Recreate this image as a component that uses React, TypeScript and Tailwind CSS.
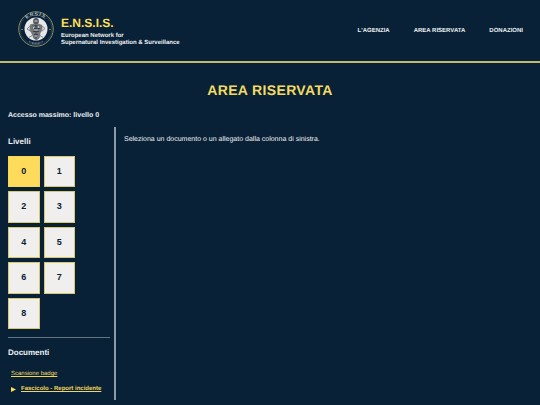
import { useState } from "react";

const LEVELS = [0, 1, 2, 3, 4, 5, 6, 7, 8];

function Emblem() {
  return (
    <svg viewBox="0 0 72 72" className="size-9 shrink-0" role="img" aria-label="Stemma E.N.S.I.S.">
      <defs>
        <path id="upper-arc" d="M9 36a27 27 0 0 1 54 0" />
      </defs>
      <circle cx="36" cy="36" r="34.5" fill="#092139" stroke="#8b915f" strokeWidth="2" />
      <circle cx="36" cy="36" r="32" fill="none" stroke="#3d566a" strokeWidth="1" />
      <circle cx="36" cy="36" r="23" fill="#e5e7e8" />
      <text fontSize="9" fontWeight="700" fill="#c6ced3" fontFamily="Liberation Sans, sans-serif" textAnchor="middle">
        <textPath href="#upper-arc" startOffset="50%">E.N.S.I.S.</textPath>
      </text>
      <path d="M31 16l5-3 5 3 1 6-3 5h-6l-3-5z" fill="#53585d" />
      <path d="M24 27l8-2 4 3 5-3 7 3 1 8-4 8-2 10-6 5-6-4-4-10-4-8z" fill="#74787c" />
      <path d="M29 30h12M28 35h16M30 41h12M32 47h8M36 26v30" stroke="#3c4249" strokeWidth="2" />
      <path d="M25 29l-7 7 8 5M47 29l7 6-7 6M28 49l-6 4M44 49l6 4" fill="none" stroke="#80868b" strokeWidth="2" />
      <path d="M33 20h6M32 31l-2 5M40 30l2 4M33 38h6M34 50h4" stroke="#d3d6d7" strokeWidth="2" />
      <path d="M22 61q14 6 28 0M28 65q8 2 16 0" fill="none" stroke="#8795a0" strokeWidth="2" strokeDasharray="2 1" />
      <circle cx="8" cy="37" r="1.5" fill="#a7a76c" />
      <circle cx="64" cy="37" r="1.5" fill="#a7a76c" />
    </svg>
  );
}

export default function App() {
  const [level, setLevel] = useState(0);

  return (
    <div className="min-h-screen bg-[#082137] font-['Liberation_Sans',Arial,sans-serif] text-[#edf0f2] [text-rendering:geometricPrecision]">
      <header className="flex items-center justify-between border-b-2 border-[#c3bb6c] pt-[11px] pr-[17px] pb-[14px] pl-[18px]">
        <div className="flex items-start gap-[7px]">
          <Emblem />
          <div className="pt-1">
            <div className="text-[12px] leading-[16px] font-bold text-[#ffdf58]">E.N.S.I.S.</div>
            <p className="pt-[2px] text-[6px] leading-[7px] font-bold">
              European Network for
              <br />
              Supernatural Investigation &amp; Surveillance
            </p>
          </div>
        </div>
        <nav className="flex gap-6 pt-1 text-[6px] leading-[10px] font-bold">
          <a href="#agenzia">L'AGENZIA</a>
          <a href="#riservata">AREA RISERVATA</a>
          <a href="#donazioni">DONAZIONI</a>
        </nav>
      </header>
      <main className="px-2 pb-[5px]">
        <h1 className="pt-[18px] text-center text-[14px] leading-[18px] font-bold tracking-wide text-[#f5db61]">AREA RISERVATA</h1>
        <p className="pt-3 text-[7px] leading-[10px] font-bold">Accesso massimo: livello 0</p>
        <div className="mt-[6px] flex">
          <aside className="w-[108px] shrink-0 border-r-2 border-[#8b9ba5] pt-[9px] pr-1 pb-[6px]">
            <h2 className="text-[8px] leading-[12px] font-bold">Livelli</h2>
            <div className="mt-2 grid h-[173px] w-[67px] grid-cols-2 grid-rows-5 gap-1">
              {LEVELS.map((n) => (
                <button
                  key={n}
                  type="button"
                  aria-pressed={n === level}
                  onClick={() => setLevel(n)}
                  className={
                    n === level
                      ? "border border-[#f5d75b] bg-[#ffdb5b] text-[9px] font-bold text-[#082137]"
                      : "border border-[#d8c96c] bg-[#f0efed] text-[9px] font-bold text-[#082137]"
                  }
                >
                  {n}
                </button>
              ))}
            </div>
            <hr className="mt-2 border-[#607383]" />
            <h2 className="mt-[9px] text-[8px] leading-[12px] font-bold">Documenti</h2>
            <ul className="mt-[10px] flex flex-col gap-[5px] pl-[3px] text-[6px] leading-[10px] text-[#f0d65e]">
              <li>
                <a href="#badge" className="underline">Scansione badge</a>
              </li>
              <li className="flex items-center gap-[5px] font-bold">
                <svg viewBox="0 0 5 5" className="size-[5px]" aria-hidden="true">
                  <path d="M0 0l5 2.5L0 5z" fill="#ffdf58" />
                </svg>
                <a href="#fascicolo" className="underline">Fascicolo - Report incidente</a>
              </li>
            </ul>
          </aside>
          <section className="pt-2 pl-2">
            <p className="text-[7px] leading-[10px]">Seleziona un documento o un allegato dalla colonna di sinistra.</p>
          </section>
        </div>
      </main>
    </div>
  );
}
